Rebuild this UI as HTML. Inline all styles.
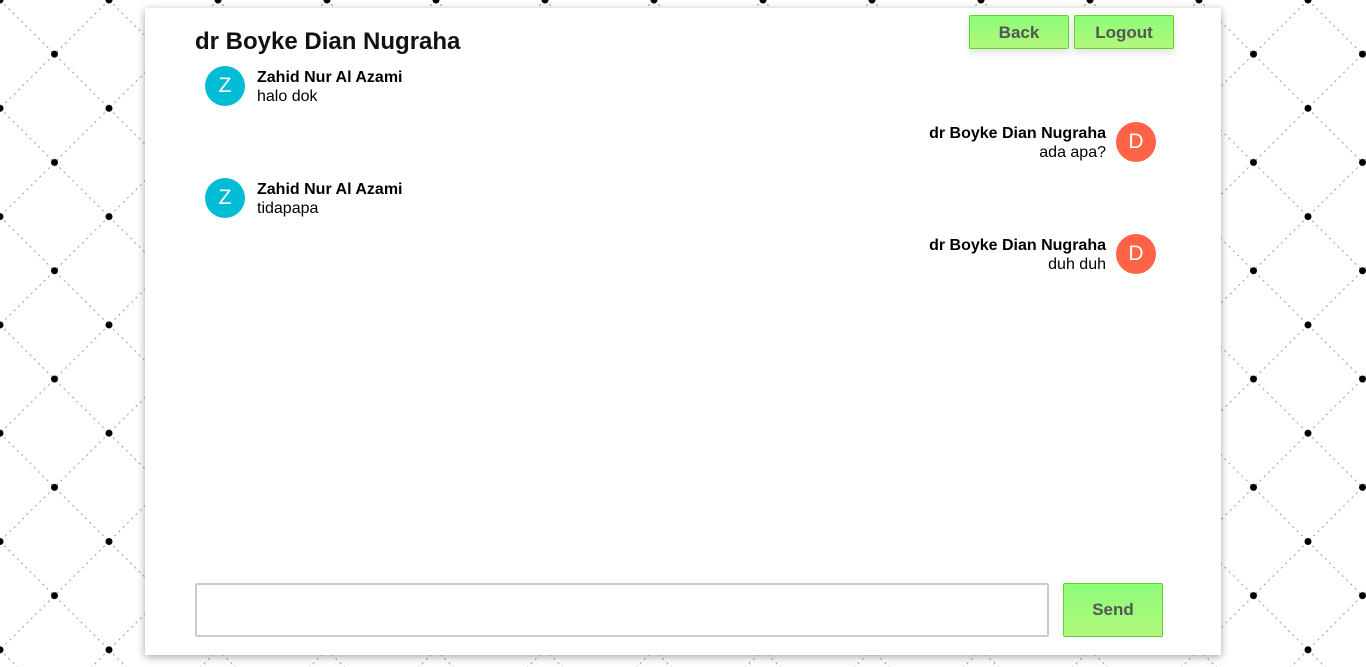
<!DOCTYPE html>
<html><head><meta charset="utf-8"><style>
body{margin:0;width:1366px;height:667px;overflow:hidden;font-family:"Liberation Sans",Arial,sans-serif;position:relative;background:#fff}
svg.bg{position:absolute;left:0;top:0}
.card{position:absolute;left:145px;top:8px;width:1076px;height:647px;background:#fff;box-shadow:0 2px 8px rgba(0,0,0,.35)}
h1{position:absolute;left:50px;top:20px;margin:0;font-size:24px;font-weight:bold;color:#111}
.btn{position:absolute;height:32px;border:1px solid #5cd62c;border-radius:2px;background:linear-gradient(#8cfc78,#b2f87c);color:#555;font-weight:bold;font-size:17px;text-align:center;line-height:33px;box-shadow:0 4px 8px rgba(0,0,0,.12)}
.av{position:absolute;width:40px;height:40px;border-radius:50%;color:#fff;font-size:21px;text-align:center;line-height:40px}
.z{background:#00bcd4}.d{background:#ff6347}
.msg{position:absolute;font-size:16px;line-height:19px;color:#000}
.msg b{display:block}
.r{text-align:right}
.inp{position:absolute;left:50px;top:575px;width:850px;height:50px;border:2px solid #ccc;border-radius:2px}
</style></head><body>
<svg class="bg" width="1366" height="667"><defs><pattern id="p" width="109" height="108.3" patternUnits="userSpaceOnUse" x="0" y="0">
<g stroke="#999" stroke-width="1" stroke-dasharray="2,4"><line x1="0" y1="0" x2="109" y2="108.3"/><line x1="109" y1="0" x2="0" y2="108.3"/></g>
<circle cx="0" cy="0" r="3.5"/><circle cx="109" cy="0" r="3.5"/><circle cx="0" cy="108.3" r="3.5"/><circle cx="109" cy="108.3" r="3.5"/><circle cx="54.5" cy="54.15" r="3.5"/>
</pattern></defs><rect width="1366" height="667" fill="url(#p)"/></svg>
<div class="card">
<h1>dr Boyke Dian Nugraha</h1>
<div class="btn" style="left:824px;top:7px;width:98px">Back</div>
<div class="btn" style="left:929px;top:7px;width:98px">Logout</div>
<div class="av z" style="left:60px;top:58px">Z</div>
<div class="msg" style="left:112px;top:60px"><b>Zahid Nur Al Azami</b>halo dok</div>
<div class="av d" style="left:971px;top:114px">D</div>
<div class="msg r" style="right:115px;top:116px"><b>dr Boyke Dian Nugraha</b>ada apa?</div>
<div class="av z" style="left:60px;top:170px">Z</div>
<div class="msg" style="left:112px;top:172px"><b>Zahid Nur Al Azami</b>tidapapa</div>
<div class="av d" style="left:971px;top:226px">D</div>
<div class="msg r" style="right:115px;top:228px"><b>dr Boyke Dian Nugraha</b>duh duh</div>
<div class="inp"></div>
<div class="btn" style="left:918px;top:575px;width:98px;height:52px;line-height:52px;box-shadow:none">Send</div>
</div>
</body></html>
